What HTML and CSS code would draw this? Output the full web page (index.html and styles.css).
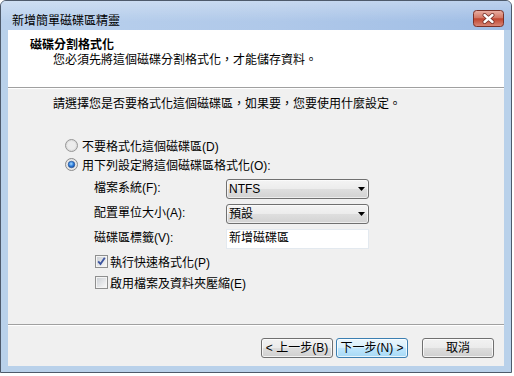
FILE: index.html
```html
<!DOCTYPE html>
<html lang="zh-Hant">
<head>
<meta charset="utf-8">
<link rel="stylesheet" href="styles.css">
</head>
<body>
<div class="window">
  <div class="titlebar">
    <span class="title">新增簡單磁碟區精靈</span>
    <svg class="close" width="31" height="17" viewBox="0 0 31 17">
      <defs>
        <linearGradient id="cg" x1="0" y1="0" x2="0" y2="1">
          <stop offset="0" stop-color="#eab1a5"/>
          <stop offset="0.45" stop-color="#d37866"/>
          <stop offset="0.52" stop-color="#c0452f"/>
          <stop offset="1" stop-color="#d98a7b"/>
        </linearGradient>
      </defs>
      <rect x="0.5" y="0.5" width="30" height="16" rx="3" fill="url(#cg)" stroke="#7a3128"/>
      <path d="M11.5 5 L19.5 12 M19.5 5 L11.5 12" stroke="#6e2a22" stroke-width="4" stroke-linecap="round"/>
      <path d="M11.5 5 L19.5 12 M19.5 5 L11.5 12" stroke="#ffffff" stroke-width="2.4" stroke-linecap="round"/>
    </svg>
  </div>
  <div class="client">
    <div class="header">
      <div class="h-title">磁碟分割格式化</div>
      <div class="h-sub">您必須先將這個磁碟分割格式化，才能儲存資料。</div>
    </div>
    <div class="content">
      <div class="intro">請選擇您是否要格式化這個磁碟區，如果要，您要使用什麼設定。</div>
      <div class="radio-row">
        <svg class="radio" width="13" height="13" viewBox="0 0 13 13">
          <defs>
            <radialGradient id="rg1" cx="0.5" cy="0.5" r="0.6">
              <stop offset="0" stop-color="#f4f4f4"/>
              <stop offset="1" stop-color="#d4d4d4"/>
            </radialGradient>
          </defs>
          <circle cx="6.5" cy="6.5" r="6" fill="url(#rg1)" stroke="#979797"/>
          <circle cx="6.5" cy="6.5" r="4.2" fill="#ececec"/>
        </svg>
        <span>不要格式化這個磁碟區(D)</span>
      </div>
      <div class="radio-row">
        <svg class="radio" width="13" height="13" viewBox="0 0 13 13">
          <defs>
            <radialGradient id="rg2" cx="0.45" cy="0.4" r="0.6">
              <stop offset="0" stop-color="#a9dcff"/>
              <stop offset="0.6" stop-color="#2a7ad9"/>
              <stop offset="1" stop-color="#1a4f9e"/>
            </radialGradient>
          </defs>
          <circle cx="6.5" cy="6.5" r="6" fill="#e6e6e6" stroke="#8a8a8a"/>
          <circle cx="6.5" cy="6.5" r="3.3" fill="url(#rg2)" stroke="#28518f" stroke-width="0.6"/>
        </svg>
        <span>用下列設定將這個磁碟區格式化(O):</span>
      </div>
      <div class="settings">
        <span class="lbl">檔案系統(F):</span>
        <div class="combo"><span>NTFS</span><svg width="7" height="4" viewBox="0 0 7 4"><path d="M0 0H7L3.5 4Z" fill="#000"/></svg></div>
        <span class="lbl">配置單位大小(A):</span>
        <div class="combo"><span>預設</span><svg width="7" height="4" viewBox="0 0 7 4"><path d="M0 0H7L3.5 4Z" fill="#000"/></svg></div>
        <span class="lbl">磁碟區標籤(V):</span>
        <div class="textbox">新增磁碟區</div>
      </div>
      <div class="checks">
        <div class="check-row">
          <svg class="cb" width="13" height="13" viewBox="0 0 13 13">
            <defs>
              <linearGradient id="cb1" x1="0" y1="0" x2="1" y2="1">
                <stop offset="0" stop-color="#cdd1d6"/>
                <stop offset="1" stop-color="#f7f7f7"/>
              </linearGradient>
            </defs>
            <rect x="0.5" y="0.5" width="12" height="12" fill="#f4f4f4" stroke="#8e8f8f"/>
            <rect x="2" y="2" width="9" height="9" fill="url(#cb1)"/>
            <path d="M3.2 6.3 L5.5 9 L9.8 2.8" fill="none" stroke="#3d55a0" stroke-width="1.9"/>
          </svg>
          <span>執行快速格式化(P)</span>
        </div>
        <div class="check-row">
          <svg class="cb" width="13" height="13" viewBox="0 0 13 13">
            <defs>
              <linearGradient id="cb2" x1="0" y1="0" x2="1" y2="1">
                <stop offset="0" stop-color="#cdd1d6"/>
                <stop offset="1" stop-color="#f7f7f7"/>
              </linearGradient>
            </defs>
            <rect x="0.5" y="0.5" width="12" height="12" fill="#f4f4f4" stroke="#8e8f8f"/>
            <rect x="2" y="2" width="9" height="9" fill="url(#cb2)"/>
          </svg>
          <span>啟用檔案及資料夾壓縮(E)</span>
        </div>
      </div>
    </div>
    <div class="footer">
      <div class="btn">&lt; 上一步(B)</div>
      <div class="btn default">下一步(N) &gt;</div>
      <div class="btn cancel">取消</div>
    </div>
  </div>
</div>
</body>
</html>
```

FILE: styles.css
```css
* { box-sizing: border-box; }
html, body { margin: 0; padding: 0; }
body {
  width: 514px;
  height: 376px;
  overflow: hidden;
  background: #ffffff;
  font-family: "Liberation Sans", "Noto Sans CJK TC", sans-serif;
  font-size: 12px;
  color: #000;
}
.window {
  width: 512px;
  height: 373px;
  border: 1px solid #4e5a6b;
  border-radius: 6px 6px 0 0;
  background: #b9d1ea;
  display: flex;
  flex-direction: column;
}
.titlebar {
  height: 29px;
  flex: none;
  display: flex;
  justify-content: space-between;
  align-items: flex-start;
  padding: 9px 7px 0 11px;
  border-radius: 5px 5px 0 0;
  background:
    linear-gradient(180deg, rgba(255,255,255,0.3), rgba(255,255,255,0) 70%),
    linear-gradient(90deg, #bad1ed 0%, #afc8e9 55%, #9fbde5 100%);
}
.title {
  margin-top: 4px;
  line-height: 14px;
}
.close { display: block; }
.client {
  margin: 0 7px;
  height: 336px;
  flex: none;
  display: flex;
  flex-direction: column;
  background: #f0f0f0;
}
.header {
  height: 58px;
  flex: none;
  background: #ffffff;
  border-bottom: 1px solid #a0a0a0;
  box-shadow: 0 1px 0 #ffffff;
  padding: 8px 0 0 22px;
}
.h-title {
  font-weight: 700;
  line-height: 14px;
}
.h-sub {
  line-height: 14px;
  margin-top: 1px;
  padding-left: 23px;
}
.content {
  flex: 1;
  padding: 9px 0 0 45px;
}
.intro { line-height: 14px; }
.radio-row {
  height: 19px;
  display: flex;
  align-items: center;
  padding-left: 12px;
}
.intro + .radio-row { margin-top: 25px; }
.radio { flex: none; margin-right: 4px; }
.settings {
  margin-top: 5px;
  padding-left: 41px;
  display: grid;
  grid-template-columns: 132px 143px;
  grid-auto-rows: 20px;
  row-gap: 5px;
  align-items: center;
}
.lbl { line-height: 14px; margin-top: -2px; }
.combo {
  height: 20px;
  border: 1px solid #707070;
  border-radius: 3px;
  background: linear-gradient(180deg, #f4f4f4 0%, #ececec 48%, #dedede 52%, #d2d2d2 100%);
  box-shadow: inset 0 0 0 1px rgba(255,255,255,0.6);
  display: flex;
  align-items: center;
  justify-content: space-between;
  padding: 0 3px 0 2px;
  line-height: 14px;
}
.combo svg { display: block; }
.textbox {
  height: 20px;
  background: #ffffff;
  border: 1px solid #e3e9ef;
  padding: 0 2px;
  line-height: 16px;
  margin-top: -1px;
}
.checks {
  margin-top: 2px;
  padding-left: 42px;
}
.check-row {
  height: 21px;
  display: flex;
  align-items: center;
}
.cb { flex: none; margin-right: 2px; }
.footer {
  height: 42px;
  flex: none;
  border-top: 1px solid #a0a0a0;
  box-shadow: inset 0 1px 0 #ffffff;
  padding: 13px 10px 0 0;
  display: flex;
  justify-content: flex-end;
  align-items: flex-start;
  gap: 3px;
}
.btn {
  width: 72px;
  height: 20px;
  border: 1px solid #707070;
  border-radius: 3px;
  background: linear-gradient(180deg, #f2f2f2 0%, #ebebeb 48%, #dddddd 52%, #cfcfcf 100%);
  box-shadow: inset 0 0 0 1px rgba(255,255,255,0.75);
  display: flex;
  align-items: center;
  justify-content: center;
  line-height: 14px;
}
.btn.default {
  border-color: #3c7fb1;
  background: linear-gradient(180deg, #eaf6fd 0%, #d9f0fc 48%, #bee6fd 52%, #a7d9f5 100%);
}
.btn.cancel { margin-left: 11px; }
```
